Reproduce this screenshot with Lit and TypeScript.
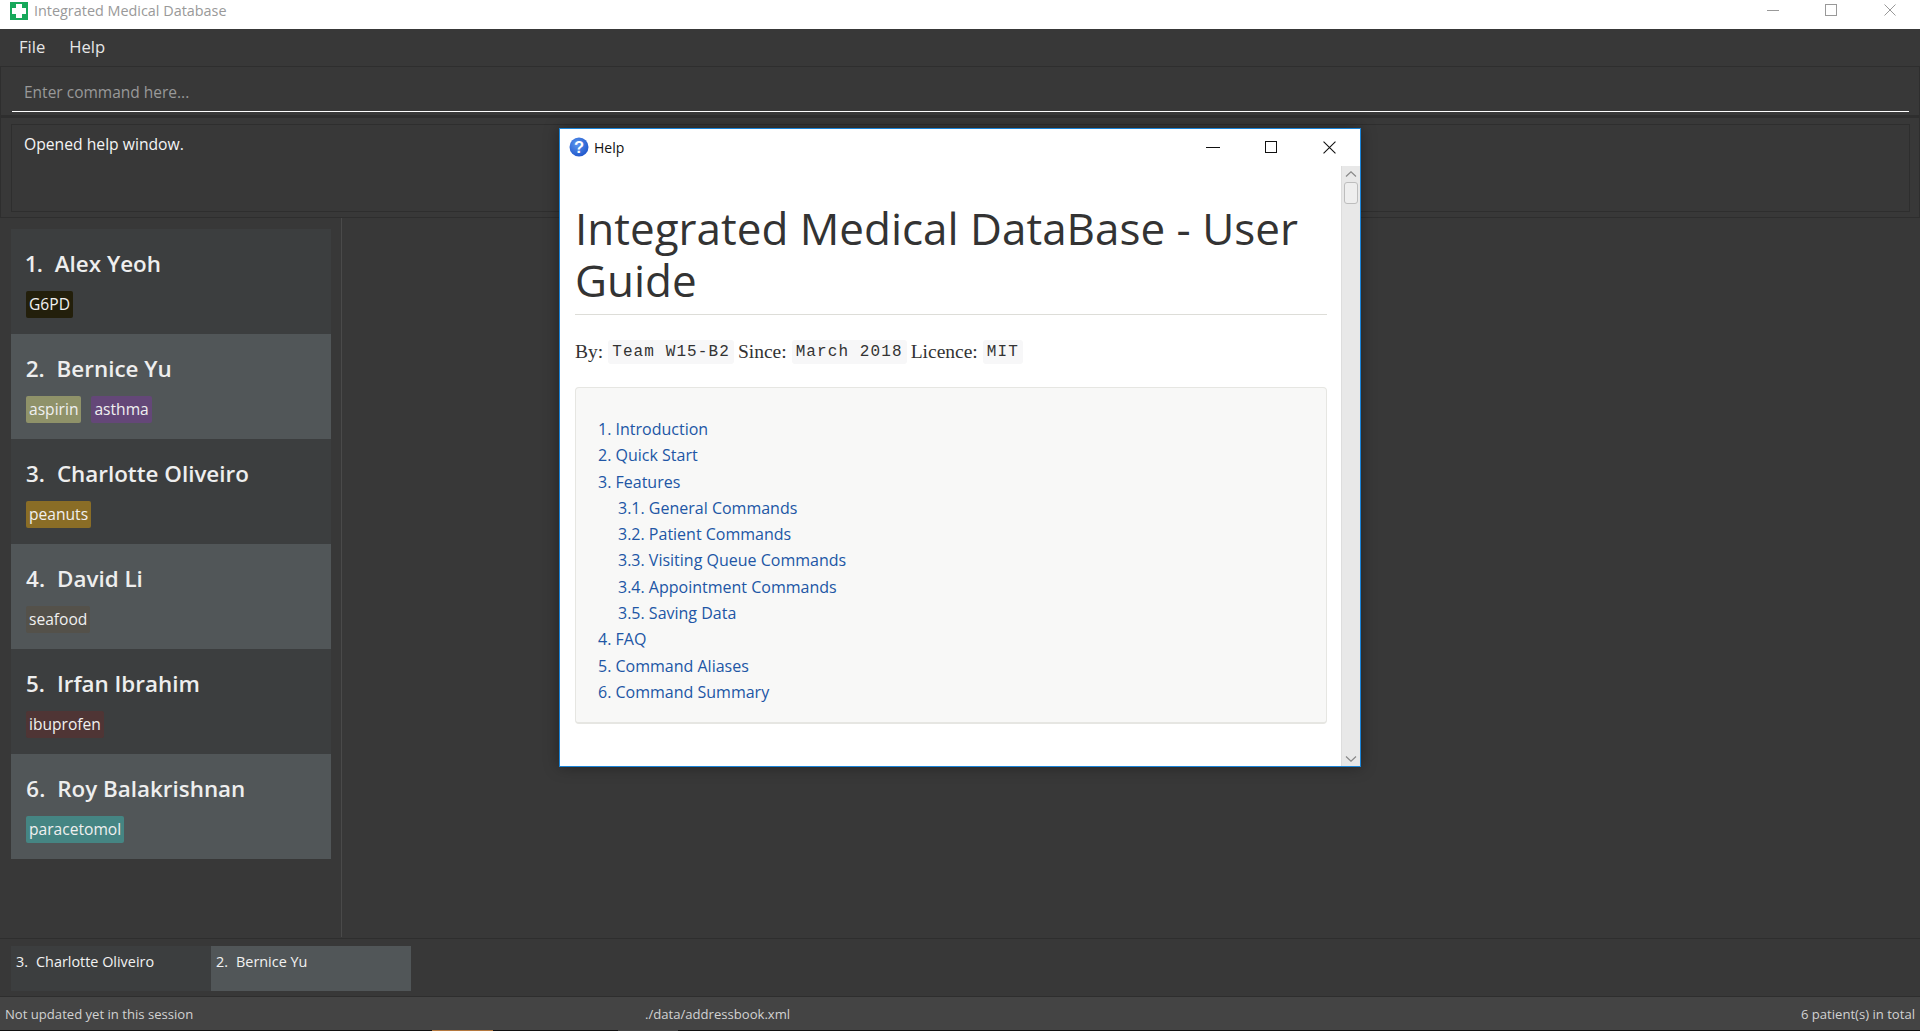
import { LitElement, html, css } from 'lit';
import { customElement } from 'lit/decorators.js';

const people = [
  { name: 'Alex Yeoh', tags: [['G6PD', '#231f0b']] },
  { name: 'Bernice Yu', tags: [['aspirin', '#8f9269'], ['asthma', '#644778']] },
  { name: 'Charlotte Oliveiro', tags: [['peanuts', '#8a6d26']] },
  { name: 'David Li', tags: [['seafood', '#54514a']] },
  { name: 'Irfan Ibrahim', tags: [['ibuprofen', '#4f3535']] },
  { name: 'Roy Balakrishnan', tags: [['paracetomol', '#458583']] },
];

const toc = [
  ['1. Introduction', false],
  ['2. Quick Start', false],
  ['3. Features', false],
  ['3.1. General Commands', true],
  ['3.2. Patient Commands', true],
  ['3.3. Visiting Queue Commands', true],
  ['3.4. Appointment Commands', true],
  ['3.5. Saving Data', true],
  ['4. FAQ', false],
  ['5. Command Aliases', false],
  ['6. Command Summary', false],
] as const;

@customElement('app-root')
export class AppRoot extends LitElement {
  static styles = css`
    :host {
      display: block;
      position: relative;
      height: 1031px;
      overflow: hidden;
      background: #383838;
      font-family: 'Open Sans', sans-serif;
      color: #fff;
    }
    .app {
      display: flex;
      flex-direction: column;
      height: 1031px;
    }
    .titlebar {
      flex: 0 0 29px;
      display: flex;
      align-items: flex-start;
      background: #fff;
      color: #999;
      font-size: 14.4px;
      line-height: 21px;
      padding-left: 10px;
    }
    .titlebar .logo {
      margin-top: 2px;
    }
    .titlebar .label {
      margin-left: 6px;
      flex: 1;
    }
    .win-btns {
      display: flex;
      align-items: center;
      margin-top: 4px;
      margin-right: 24px;
      gap: 46px;
    }
    .win-btns .x {
      margin-left: 1px;
    }
    .menubar {
      flex: 0 0 37px;
      display: flex;
      align-items: center;
      gap: 24px;
      padding: 0 0 2px 19px;
      box-sizing: border-box;
      font-size: 16.6px;
      color: #e6e6e6;
    }
    .command {
      flex: 0 0 51px;
      box-sizing: border-box;
      border: 1px solid #2e2e2e;
      border-bottom-width: 2px;
      padding: 0 10px 3px 11px;
      display: flex;
    }
    .command-input {
      flex: 1;
      box-sizing: border-box;
      height: 45px;
      border-bottom: 1px solid #fff;
      padding: 4px 0 0 12px;
      font-size: 15.5px;
      line-height: 42px;
      color: #999;
    }
    .result {
      flex: 0 0 101px;
      box-sizing: border-box;
      border: 1px solid #2e2e2e;
      padding: 6px 9px 5px 10px;
      display: flex;
    }
    .result-inner {
      flex: 1;
      border: 1px solid #2e2e2e;
      padding: 8px 12px 0;
      font-size: 15.7px;
      line-height: 22px;
      color: #f4f4f4;
    }
    .main {
      flex: 1;
      display: flex;
      min-height: 0;
    }
    .list {
      flex: 0 0 342px;
      box-sizing: border-box;
      border-right: 1px solid #4a4a4a;
      padding: 11px 10px 0 11px;
      margin-bottom: 1px;
    }
    .card {
      height: 105px;
      box-sizing: border-box;
      background: #3c3e3f;
      padding: 18px 15px 0;
    }
    .card.alt {
      background: #515658;
    }
    .name {
      font-size: 22.4px;
      font-weight: 600;
      line-height: 34px;
      color: #eee;
      display: flex;
      font-variant-numeric: proportional-nums;
    }
    .name .num {
      margin-right: 12px;
    }
    .tags {
      display: flex;
      gap: 10px;
      margin-top: 10px;
    }
    .tag {
      height: 27px;
      line-height: 26px;
      padding: 0 3px;
      border-radius: 2px;
      font-size: 15.6px;
      color: #f0f0f0;
    }
    .browser {
      flex: 0 0 59px;
      box-sizing: border-box;
      border-top: 1px solid #2e2e2e;
      border-bottom: 1px solid #2e2e2e;
      padding: 7px 0 5px 11px;
      display: flex;
    }
    .tab {
      flex: 0 0 200px;
      box-sizing: border-box;
      background: #3c3e3f;
      padding: 4px 5px 0;
      font-size: 14.4px;
      line-height: 24px;
      color: #f2f2f2;
    }
    .tab.alt {
      background: #515658;
    }
    .tab span {
      margin-right: 8px;
    }
    .status {
      flex: 0 0 33px;
      box-sizing: border-box;
      background: #444;
      display: grid;
      grid-template-columns: 640px 1fr auto;
      align-items: center;
      padding: 0 5px;
      font-size: 13.1px;
      color: #d2d2d2;
    }
    .taskline {
      flex: 0 0 1px;
      background: #111;
    }
    .help {
      position: absolute;
      left: 559px;
      top: 128px;
      width: 802px;
      height: 639px;
      box-sizing: border-box;
      background: #fff;
      border: 1px solid #1a84d8;
      box-shadow: 0 0 14px rgba(0, 0, 0, 0.35);
      display: flex;
      flex-direction: column;
      color: #333;
    }
    .help-title {
      flex: 0 0 37px;
      box-sizing: border-box;
      display: flex;
      align-items: center;
      padding: 0 0 1px 9px;
      font-size: 14px;
      color: #111;
    }
    .help-title .label {
      flex: 1;
      margin-left: 5px;
    }
    .help-btns {
      display: flex;
      align-items: center;
      gap: 45px;
      margin-right: 24px;
    }
    .help-btns .min {
      width: 14px;
    }
    .help-btns .x {
      width: 13px;
      height: 13px;
      margin-left: 1px;
    }
    .help-body {
      flex: 1;
      display: flex;
      min-height: 0;
    }
    .doc {
      flex: 1;
      padding: 36px 14px 0 15px;
    }
    h1 {
      margin: 0;
      font-size: 44px;
      font-weight: 400;
      line-height: 52px;
      color: #333;
      padding-bottom: 8px;
      border-bottom: 1px solid #ddddd8;
    }
    .byline {
      margin-top: 25px;
      height: 24px;
      line-height: 24px;
      font-family: 'Liberation Serif', serif;
      font-size: 19.5px;
      color: #333;
      display: flex;
      gap: 4px;
    }
    code {
      font-family: 'Liberation Mono', monospace;
      font-size: 16px;
      letter-spacing: 1.1px;
      background: #f7f7f8;
      border-radius: 3px;
      padding: 0 4px;
      margin-left: 1px;
      color: #333;
    }
    .toc {
      margin-top: 23px;
      height: 337px;
      box-sizing: border-box;
      background: #f8f8f7;
      border: 1px solid #e6e6e2;
      border-bottom-width: 2px;
      border-radius: 4px;
      padding: 28px 22px 0;
    }
    .toc a {
      display: block;
      height: 26.3px;
      line-height: 26.3px;
      font-size: 16px;
      color: #2156a5;
      text-decoration: none;
    }
    .toc a.sub {
      padding-left: 20px;
    }
    .scroll {
      flex: 0 0 18px;
      background: #e8e8e8;
      display: flex;
      flex-direction: column;
      align-items: center;
      border-left: 1px solid #ddd;
    }
    .scroll .thumb {
      width: 14px;
      height: 22px;
      box-sizing: border-box;
      margin-top: 5px;
      background: #eee;
      border: 1px solid #bdbdbd;
      border-radius: 3px;
    }
    .scroll .arrow {
      margin-top: 5px;
    }
    .scroll .arrow.down {
      margin-top: auto;
      margin-bottom: 4px;
    }
    .taskbar-bits {
      position: absolute;
      left: 0;
      right: 0;
      bottom: 0;
      height: 1px;
    }
    .taskbar-bits i {
      position: absolute;
      top: 0;
      height: 1px;
    }
  `;

  private winBtns(color: string) {
    return html`
      <svg class="min" width="12" height="12" viewBox="0 0 12 12" preserveAspectRatio="none" shape-rendering="crispEdges">
        <path d="M0 6h12" stroke=${color} stroke-width="1" fill="none" />
      </svg>
      <svg width="12" height="12" viewBox="0 0 12 12" shape-rendering="crispEdges">
        <rect x="0.5" y="0.5" width="11" height="11" stroke=${color} fill="none" />
      </svg>
      <svg class="x" width="12" height="12" viewBox="0 0 12 12">
        <path d="M0.5 0.5L11.5 11.5M11.5 0.5L0.5 11.5" stroke=${color} fill="none" />
      </svg>
    `;
  }

  render() {
    return html`
      <div class="app">
        <div class="titlebar">
          <svg class="logo" width="18" height="18" viewBox="0 0 18 18">
            <rect width="18" height="18" fill="#17a85a" />
            <path d="M6 2h6v4h4v6h-4v4H6v-4H2V6h4z" fill="#fff" />
          </svg>
          <span class="label">Integrated Medical Database</span>
          <div class="win-btns">${this.winBtns('#999')}</div>
        </div>
        <div class="menubar"><span>File</span><span>Help</span></div>
        <div class="command"><div class="command-input">Enter command here...</div></div>
        <div class="result"><div class="result-inner">Opened help window.</div></div>
        <div class="main">
          <div class="list">
            ${people.map(
              (p, i) => html`
                <div class="card ${i % 2 ? 'alt' : ''}">
                  <div class="name"><span class="num">${i + 1}.</span><span>${p.name}</span></div>
                  <div class="tags">
                    ${p.tags.map(
                      ([t, c]) => html`<span class="tag" style="background:${c}">${t}</span>`
                    )}
                  </div>
                </div>
              `
            )}
          </div>
        </div>
        <div class="browser">
          <div class="tab"><span>3.</span>Charlotte Oliveiro</div>
          <div class="tab alt"><span>2.</span>Bernice Yu</div>
        </div>
        <div class="status">
          <div>Not updated yet in this session</div>
          <div>./data/addressbook.xml</div>
          <div>6 patient(s) in total</div>
        </div>
        <div class="taskline"></div>
      </div>

      <div class="taskbar-bits">
        <i style="left:432px;width:61px;background:#b5793f"></i>
        <i style="left:618px;width:60px;background:#444"></i>
      </div>

      <div class="help">
        <div class="help-title">
          <svg width="20" height="20" viewBox="0 0 20 20">
            <defs>
              <radialGradient id="q" cx="0.4" cy="0.35" r="0.75">
                <stop offset="0" stop-color="#5c97ee" />
                <stop offset="1" stop-color="#1a50c8" />
              </radialGradient>
            </defs>
            <circle cx="10" cy="10" r="9.5" fill="url(#q)" />
            <text x="10" y="16" text-anchor="middle" font-family="Liberation Sans, sans-serif" font-size="16.5" font-weight="700" fill="#fff">?</text>
          </svg>
          <span class="label">Help</span>
          <div class="help-btns">${this.winBtns('#111')}</div>
        </div>
        <div class="help-body">
          <div class="doc">
            <h1>Integrated Medical DataBase - User Guide</h1>
            <div class="byline">
              <span>By:</span><code>Team W15-B2</code><span>Since:</span><code>March 2018</code><span>Licence:</span><code>MIT</code>
            </div>
            <div class="toc">
              ${toc.map(([t, sub]) => html`<a class=${sub ? 'sub' : ''}>${t}</a>`)}
            </div>
          </div>
          <div class="scroll">
            <svg class="arrow" width="12" height="6" viewBox="0 0 12 6">
              <path d="M1 5.5L6 0.8L11 5.5" stroke="#888" fill="none" stroke-width="1.2" />
            </svg>
            <div class="thumb"></div>
            <svg class="arrow down" width="12" height="6" viewBox="0 0 12 6">
              <path d="M1 0.5L6 5.2L11 0.5" stroke="#888" fill="none" stroke-width="1.2" />
            </svg>
          </div>
        </div>
      </div>
    `;
  }
}
